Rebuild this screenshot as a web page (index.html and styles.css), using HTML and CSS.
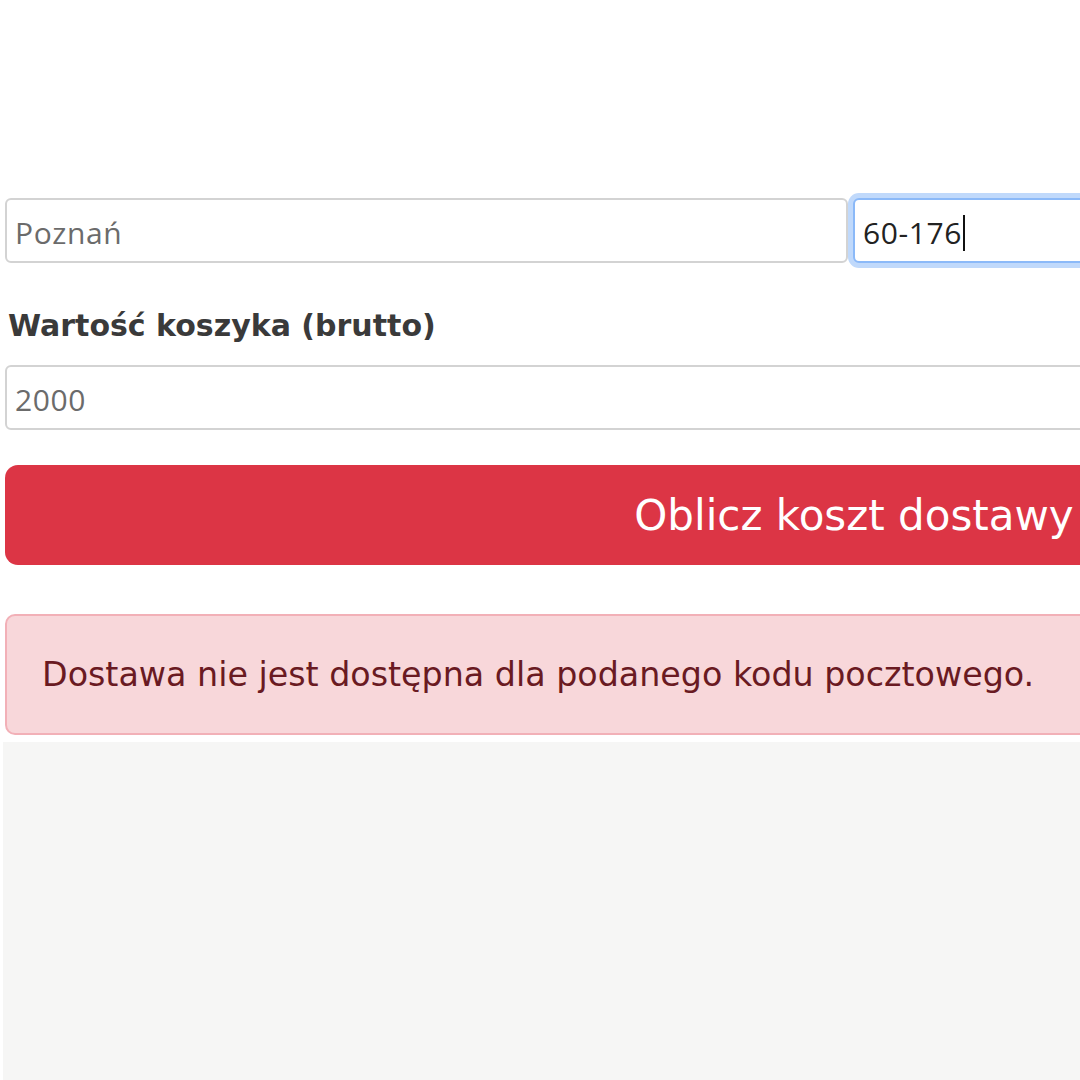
FILE: index.html
```html
<!DOCTYPE html>
<html lang="pl">
<head>
    <meta charset="UTF-8">
    <meta name="viewport" content="width=device-width, initial-scale=1.0">
    <title>Koszt dostawy</title>
    <link rel="stylesheet" href="styles.css">
</head>
<body>
    <div class="page">
        <form class="delivery-form" onsubmit="return false;">
            <!-- City + postal code -->
            <div class="address-row">
                <input class="field muted" type="text" value="Poznań">
                <div class="field focused">
                    <span class="value">60-176</span><span class="caret"></span>
                </div>
            </div>

            <label class="field-label" for="cartValue">Wartość koszyka (brutto)</label>
            <input class="field muted" id="cartValue" type="text" value="2000">

            <button class="button" type="submit">Oblicz koszt dostawy</button>

            <div class="alert">Dostawa nie jest dostępna dla podanego kodu pocztowego.</div>
        </form>
    </div>
    <div class="footer-area"></div>
</body>
</html>
```

FILE: styles.css
```css
/* General Reset */
body, html {
    margin: 0;
    padding: 0;
    height: 100%;
    overflow: hidden;
    background: #ffffff;
}

.page {
    padding: 198px 0 0 5px;
    background: #ffffff;
}

/* Form */
.delivery-form {
    width: 1698px;
    display: flex;
    flex-direction: column;
}

.address-row {
    display: grid;
    grid-template-columns: 843px 1fr;
    gap: 5px;
}

.field {
    box-sizing: border-box;
    height: 65px;
    width: 100%;
    margin: 0;
    padding: 4px 8px 0;
    border: 2px solid #d3d3d3;
    border-radius: 6px;
    background: #fff;
    font-family: "Open Sans", "Liberation Sans", sans-serif;
    font-size: 30px;
    letter-spacing: 0.6px;
    color: #222;
    outline: none;
}

.field.muted {
    color: #6b6b6b;
}

.field.focused {
    display: flex;
    align-items: center;
    border-color: #8bb9f8;
    box-shadow: 0 0 0 5px #c0d9fb;
}

.caret {
    display: inline-block;
    width: 2px;
    height: 36px;
    background: #111;
    margin-left: 1px;
}

.field-label {
    margin: 45px 0 22px 3px;
    font-family: "DejaVu Sans", Verdana, sans-serif;
    font-weight: bold;
    font-size: 30px;
    color: #3a3a3a;
}

/* Button */
.button {
    margin-top: 35px;
    height: 100px;
    border: none;
    border-radius: 13px;
    background-color: #dc3545;
    color: #fff;
    font-family: "DejaVu Sans", Verdana, sans-serif;
    font-size: 42px;
    cursor: pointer;
}

/* Error message */
.alert {
    box-sizing: border-box;
    margin-top: 49px;
    height: 121px;
    display: flex;
    align-items: center;
    padding-left: 35px;
    border: 2px solid #f2b0b7;
    border-radius: 10px;
    background: #f8d7da;
    color: #6a1a22;
    font-family: "DejaVu Sans", Verdana, sans-serif;
    font-size: 33.3px;
}

.footer-area {
    margin: 7px 0 0 3px;
    height: 400px;
    background: #f6f6f5;
}
```
